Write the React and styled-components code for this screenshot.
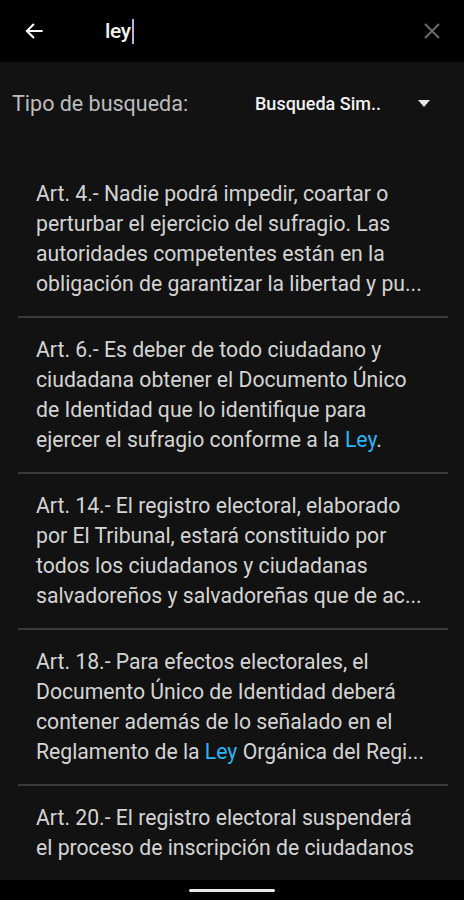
import React from 'react';
import styled, { createGlobalStyle } from 'styled-components';

const GlobalStyle = createGlobalStyle`
  html, body {
    margin: 0;
    padding: 0;
    background: #121212;
  }
  body {
    font-family: Roboto, "Noto Sans", sans-serif;
  }
`;

const Screen = styled.div`
  width: 464px;
  height: 900px;
  display: flex;
  flex-direction: column;
  background: #121212;
  overflow: hidden;
`;

const SearchBar = styled.div`
  height: 62px;
  flex-shrink: 0;
  background: #000;
  display: flex;
  align-items: center;
  padding: 0 20px 0 22px;
`;

const IconButton = styled.div`
  width: 24px;
  height: 24px;
  display: flex;
  align-items: center;
  justify-content: center;
`;

const Query = styled.div`
  flex: 1;
  margin-left: 59px;
  display: flex;
  align-items: center;
  font-size: 21px;
  font-weight: 500;
  color: #f2f2f2;
  letter-spacing: -0.4px;
`;

const Caret = styled.span`
  display: inline-block;
  width: 2px;
  height: 25px;
  margin-left: 1px;
  background: #b8b0e8;
`;

const FilterRow = styled.div`
  height: 82px;
  flex-shrink: 0;
  display: flex;
  align-items: center;
  padding: 0 34px 0 12px;
`;

const FilterLabel = styled.div`
  font-size: 21.5px;
  color: #bdbdbd;
  width: 243px;
`;

const FilterValue = styled.div`
  flex: 1;
  font-size: 18px;
  font-weight: 500;
  color: #f0f0f0;
`;

const DropArrow = styled.div`
  width: 0;
  height: 0;
  border-left: 6px solid transparent;
  border-right: 6px solid transparent;
  border-top: 7px solid #e8e8e8;
`;

const List = styled.div`
  flex: 1;
  overflow: hidden;
  padding: 18px 16px 0 18px;
`;

const Item = styled.div`
  padding: 17px 10px 17px 18px;
  border-bottom: ${p => (p.last ? 'none' : '2px solid #3a3a3a')};
  font-size: 21.2px;
  line-height: 30px;
  color: #d4d4d4;
  white-space: nowrap;
`;

const Highlight = styled.span`
  color: #29b6f6;
`;

const NavBar = styled.div`
  height: 20px;
  flex-shrink: 0;
  background: #000;
  display: flex;
  justify-content: center;
  padding-top: 9px;
  box-sizing: border-box;
`;

const Handle = styled.div`
  width: 86px;
  height: 3px;
  border-radius: 2px;
  background: #e8e8e8;
`;

const items = [
  [
    'Art. 4.- Nadie podrá impedir, coartar o',
    'perturbar el ejercicio del sufragio. Las',
    'autoridades competentes están en la',
    'obligación de garantizar la libertad y pu...',
  ],
  [
    'Art. 6.- Es deber de todo ciudadano y',
    'ciudadana obtener el Documento Único',
    'de Identidad que lo identifique para',
    ['ejercer el sufragio conforme a la ', 'Ley', '.'],
  ],
  [
    'Art. 14.- El registro electoral, elaborado',
    'por El Tribunal, estará constituido por',
    'todos los ciudadanos y ciudadanas',
    'salvadoreños y salvadoreñas que de ac...',
  ],
  [
    'Art. 18.- Para efectos electorales, el',
    'Documento Único de Identidad deberá',
    'contener además de lo señalado en el',
    ['Reglamento de la ', 'Ley', ' Orgánica del Regi...'],
  ],
  [
    'Art. 20.- El registro electoral suspenderá',
    'el proceso de inscripción de ciudadanos',
  ],
];

function Line({ text }) {
  if (Array.isArray(text)) {
    return (
      <div>
        {text[0]}
        <Highlight>{text[1]}</Highlight>
        {text[2]}
      </div>
    );
  }
  return <div>{text}</div>;
}

export default function App() {
  return (
    <Screen>
      <GlobalStyle />
      <SearchBar>
        <IconButton>
          <svg width="20" height="20" viewBox="0 0 24 24" fill="none" stroke="#fff" strokeWidth="2.6" strokeLinecap="square">
            <path d="M21 12H4M11 4.5L3.5 12L11 19.5" />
          </svg>
        </IconButton>
        <Query>
          ley<Caret />
        </Query>
        <IconButton>
          <svg width="18" height="18" viewBox="0 0 18 18" fill="none" stroke="#6b6b6b" strokeWidth="2">
            <path d="M2 2L16 16M16 2L2 16" />
          </svg>
        </IconButton>
      </SearchBar>
      <FilterRow>
        <FilterLabel>Tipo de busqueda:</FilterLabel>
        <FilterValue>Busqueda Sim..</FilterValue>
        <DropArrow />
      </FilterRow>
      <List>
        {items.map((lines, i) => (
          <Item key={i} last={i === items.length - 1}>
            {lines.map((l, j) => (
              <Line key={j} text={l} />
            ))}
          </Item>
        ))}
      </List>
      <NavBar>
        <Handle />
      </NavBar>
    </Screen>
  );
}
